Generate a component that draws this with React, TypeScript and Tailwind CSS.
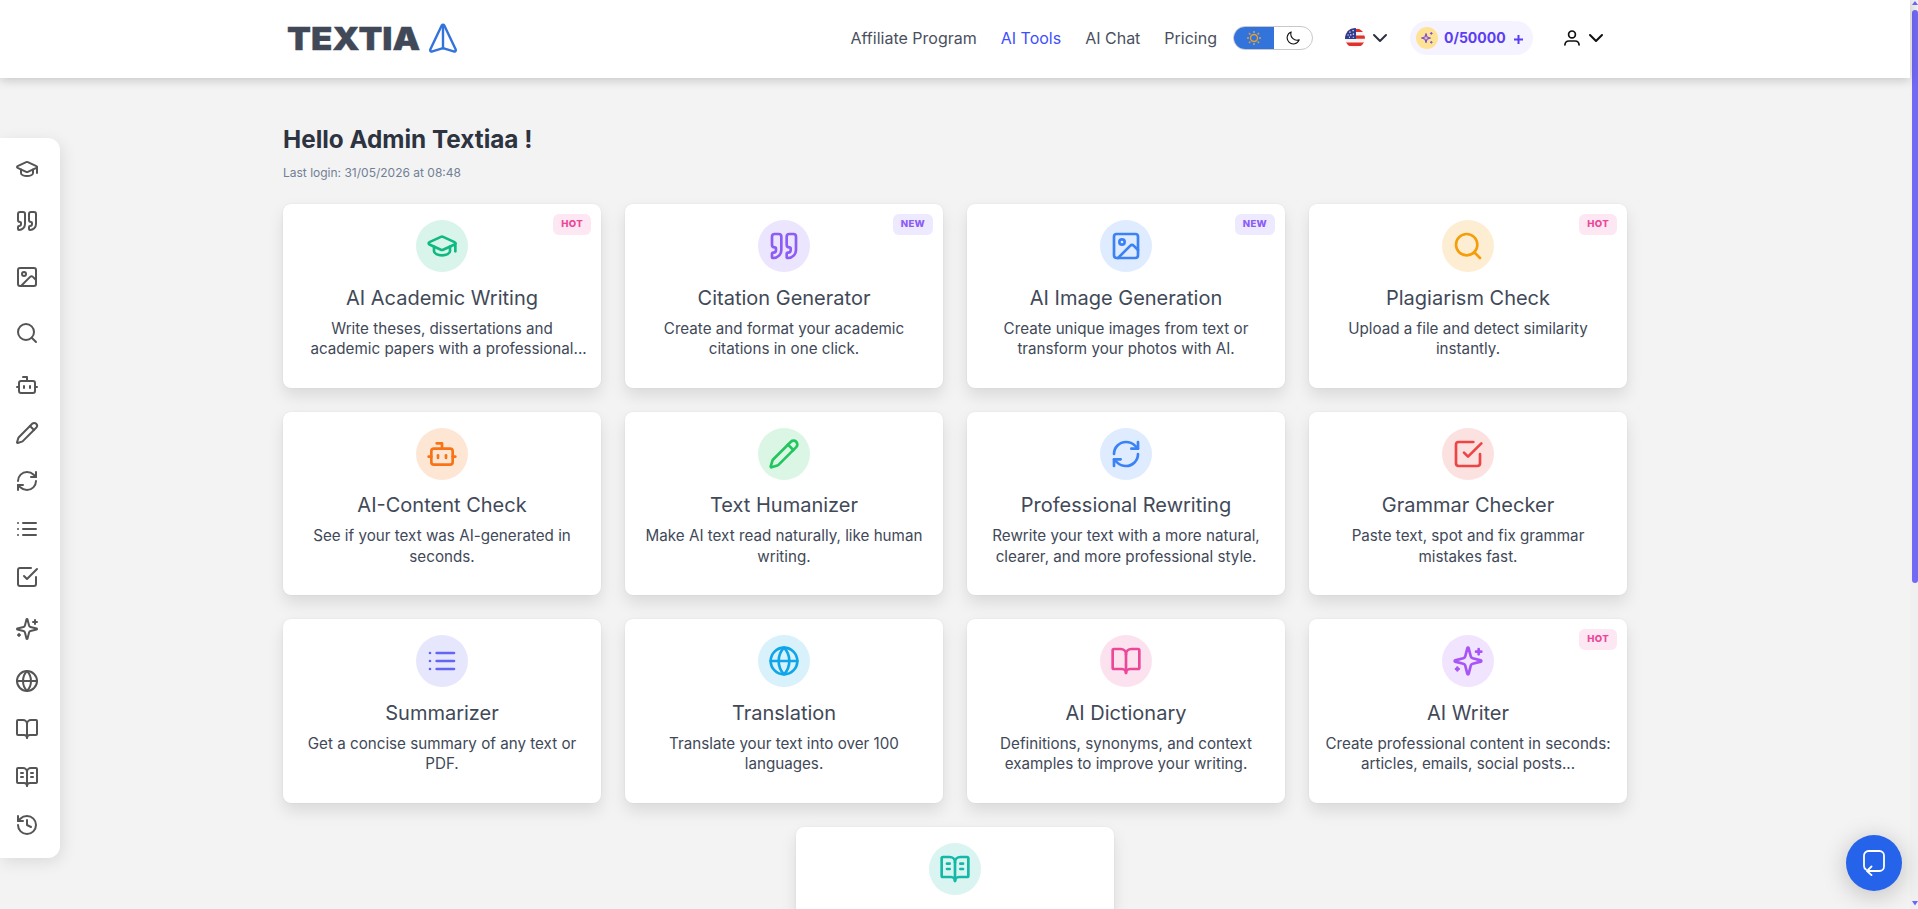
import React from 'react';
import {
  BookOpen,
  BookOpenText,
  Bot,
  ChevronDown,
  Globe,
  GraduationCap,
  History,
  Image as ImageIcon,
  Pencil,
  Quote,
  RefreshCw,
} from 'lucide-react';

interface IconProps {
  size?: number;
}

type IconType = React.ComponentType<IconProps>;

interface Tool {
  title: string;
  desc: string;
  clipped?: boolean;
  icon: IconType;
  color: string;
  badge?: 'HOT' | 'NEW';
}

const Svg: React.FC<{ size?: number; children: React.ReactNode }> = ({ size = 24, children }) => (
  <svg width={size} height={size} viewBox="0 0 24 24" fill="none" stroke="currentColor" strokeWidth={2} strokeLinecap="round" strokeLinejoin="round">
    {children}
  </svg>
);

const Search: IconType = ({ size }) => (
  <Svg size={size}>
    <circle cx="11" cy="11" r="8" />
    <path d="m21 21-4.3-4.3" />
  </Svg>
);

const List: IconType = ({ size }) => (
  <Svg size={size}>
    <path d="M8 6h13M8 12h13M8 18h13M3 6h.01M3 12h.01M3 18h.01" />
  </Svg>
);

const CheckSquare: IconType = ({ size }) => (
  <Svg size={size}>
    <path d="m9 11 3 3L22 4" />
    <path d="M21 12v7a2 2 0 0 1-2 2H5a2 2 0 0 1-2-2V5a2 2 0 0 1 2-2h11" />
  </Svg>
);

const Sparkles: IconType = ({ size }) => (
  <Svg size={size}>
    <path d="M9.937 15.5A2 2 0 0 0 8.5 14.063l-6.135-1.582a.5.5 0 0 1 0-.962L8.5 9.936A2 2 0 0 0 9.937 8.5l1.582-6.135a.5.5 0 0 1 .963 0L14.063 8.5A2 2 0 0 0 15.5 9.937l6.135 1.581a.5.5 0 0 1 0 .964L15.5 14.063a2 2 0 0 0-1.437 1.437l-1.582 6.135a.5.5 0 0 1-.963 0z" />
    <path d="M20 3v4M22 5h-4M4 17v2M5 18H3" />
  </Svg>
);

const SIDEBAR: { icon: IconType; tall?: boolean }[] = [
  { icon: GraduationCap },
  { icon: Quote, tall: true },
  { icon: ImageIcon, tall: true },
  { icon: Search, tall: true },
  { icon: Bot },
  { icon: Pencil },
  { icon: RefreshCw },
  { icon: List },
  { icon: CheckSquare },
  { icon: Sparkles, tall: true },
  { icon: Globe },
  { icon: BookOpen },
  { icon: BookOpenText },
  { icon: History },
];

const TOOLS: Tool[] = [
  { title: 'AI Academic Writing', desc: 'Write theses, dissertations and academic papers with a professional', clipped: true, icon: GraduationCap, color: 'text-[#10b981] bg-[#10b981]/16', badge: 'HOT' },
  { title: 'Citation Generator', desc: 'Create and format your academic citations in one click.', icon: Quote, color: 'text-[#8b5cf6] bg-[#8b5cf6]/16', badge: 'NEW' },
  { title: 'AI Image Generation', desc: 'Create unique images from text or transform your photos with AI.', icon: ImageIcon, color: 'text-[#3b82f6] bg-[#3b82f6]/16', badge: 'NEW' },
  { title: 'Plagiarism Check', desc: 'Upload a file and detect similarity instantly.', icon: Search, color: 'text-[#f59e0b] bg-[#f59e0b]/18', badge: 'HOT' },
  { title: 'AI-Content Check', desc: 'See if your text was AI-generated in seconds.', icon: Bot, color: 'text-[#f97316] bg-[#f97316]/18' },
  { title: 'Text Humanizer', desc: 'Make AI text read naturally, like human writing.', icon: Pencil, color: 'text-[#22c55e] bg-[#22c55e]/16' },
  { title: 'Professional Rewriting', desc: 'Rewrite your text with a more natural, clearer, and more professional style.', icon: RefreshCw, color: 'text-[#3b82f6] bg-[#3b82f6]/16' },
  { title: 'Grammar Checker', desc: 'Paste text, spot and fix grammar mistakes fast.', icon: CheckSquare, color: 'text-[#ef4444] bg-[#ef4444]/16' },
  { title: 'Summarizer', desc: 'Get a concise summary of any text or PDF.', icon: List, color: 'text-[#6366f1] bg-[#6366f1]/16' },
  { title: 'Translation', desc: 'Translate your text into over 100 languages.', icon: Globe, color: 'text-[#0ea5e9] bg-[#0ea5e9]/16' },
  { title: 'AI Dictionary', desc: 'Definitions, synonyms, and context examples to improve your writing.', icon: BookOpen, color: 'text-[#ec4899] bg-[#ec4899]/16' },
  { title: 'AI Writer', desc: 'Create professional content in seconds: articles, emails, social posts...', icon: Sparkles, color: 'text-[#a855f7] bg-[#a855f7]/16', badge: 'HOT' },
  { title: '', desc: '', icon: BookOpenText, color: 'text-[#14b8a6] bg-[#14b8a6]/16' },
];

const BADGE_STYLES = {
  HOT: 'bg-[#fce7f3] text-[#ec4899]',
  NEW: 'bg-[#ede9fe] text-[#8b5cf6]',
};

const ToolCard: React.FC<{ tool: Tool }> = ({ tool }) => {
  const Icon = tool.icon;
  return (
    <div className="relative flex h-[183.6px] w-[318px] flex-col items-center rounded-lg bg-white px-4 pt-4 text-center text-[#414958] shadow-[0_8px_16px_rgba(0,0,0,0.1),0_0_2px_rgba(0,0,0,0.08)]">
      {tool.badge && (
        <span className={`absolute right-[10px] top-[10px] h-[21px] rounded-md px-2 text-[9.6px] font-extrabold leading-[19px] tracking-[0.3px] ${BADGE_STYLES[tool.badge]}`}>
          {tool.badge}
        </span>
      )}
      <div className={`flex size-[52px] shrink-0 items-center justify-center rounded-full ${tool.color}`}>
        <Icon size={32} />
      </div>
      <h2 className="mt-[11.7px] text-xl leading-7">{tool.title}</h2>
      <p className="mt-[7px] w-[286px] text-[15.2px] leading-[20.3px]">
        {tool.desc}
        {/* the ellipsis hangs past the centered line */}
        {tool.clipped && <span className="inline-block w-0 whitespace-nowrap">...</span>}
      </p>
    </div>
  );
};

const Logo = () => (
  <div className="flex items-center">
    <span className="mt-px w-[133px] origin-left scale-x-[1.108] text-[31.5px] font-black leading-none text-[#414958] [-webkit-text-stroke:0.3px_#414958]">TEXTIA</span>
    <svg className="ml-2" width="30" height="30" viewBox="0 0 30 30" fill="none" stroke="#3273dc" strokeWidth="2.4" strokeLinecap="round" strokeLinejoin="round">
      <path d="M13.7 2.4a1.6 1.6 0 0 1 2.6 0L27.6 26.3c.6 1.4-.5 2.6-2 2.1L15 25.2 4.4 28.4c-1.5.5-2.6-.7-2-2.1z" />
      <path d="M15 2.5v22.7" />
    </svg>
  </div>
);

const ThemeToggle = () => (
  <div className="flex h-6 w-20 overflow-hidden rounded-full border border-[#c8c8c8]">
    <div className="flex w-10 items-center justify-center bg-[#3273dc]">
      <svg width="14" height="14" viewBox="0 0 14 14" fill="none" stroke="#dfa23a" strokeWidth="1.4">
        <circle cx="7" cy="7" r="3.5" />
        <path d="M7 0v2M7 12v2M0 7h2M12 7h2M2 2l1.4 1.4M10.6 10.6 12 12M2 12l1.4-1.4M10.6 3.4 12 2" />
      </svg>
    </div>
    <div className="flex flex-1 items-center justify-center">
      <svg width="14" height="14" viewBox="0 0 14 14" fill="none" stroke="#111" strokeWidth="1.1" strokeLinejoin="round">
        <path d="M5.2.9a6.2 6.2 0 1 0 8 7.9A6.2 6.2 0 0 1 5.2.9z" />
      </svg>
    </div>
  </div>
);

const Flag = () => (
  <svg width="20" height="20" viewBox="0 0 20 20">
    <clipPath id="flag">
      <circle cx="10" cy="10" r="10" />
    </clipPath>
    <g clipPath="url(#flag)">
      <path fill="#f4f4f4" d="M0 0h20v20H0z" />
      <path fill="#e0312b" d="M0 1h20v3H0zM0 7.5h20v3.3H0zM0 14.6h20v3.3H0z" />
      <path fill="#2f3c8f" d="M0 0h11v11H0z" />
      <path fill="#fff" d="M7.5 2h1.2v1.2H7.5zM4.3 3.6h1.2v1.2H4.3zM7.8 5.5H9v1.2H7.8zM2.5 6.4h1.2v1.2H2.5zM5.2 6.2h1.2v1.2H5.2zM4 8.8h1v1H4zM7.8 8.7h1v1h-1z" />
    </g>
  </svg>
);

const Header = () => (
  <header className="relative z-10 h-[78px] bg-white shadow-[0_2px_10px_rgba(0,0,0,0.2)]">
    <div className="mx-auto flex h-[76px] w-[1336px] items-center">
      <Logo />
      <nav className="ml-auto flex items-center gap-6 text-base text-[#4a5060]">
        <a>Affiliate Program</a>
        <a className="text-[#3d4eff]">AI Tools</a>
        <a>AI Chat</a>
        <a>Pricing</a>
      </nav>
      <div className="ml-4">
        <ThemeToggle />
      </div>
      <div className="ml-8 flex items-center gap-[3px] text-[#2d3142]">
        <Flag />
        <ChevronDown size={24} />
      </div>
      <div className="ml-[18px] flex h-[34px] w-[123px] items-center rounded-full bg-[#f5f3ff] pl-1.5 text-sm font-bold text-[#5b3df5]">
        <span className="mr-1.5 flex size-[22px] items-center justify-center rounded-full bg-[#fee394] text-[#7c4fd8]">
          <svg width="12" height="12" viewBox="0 0 12 12" fill="none" stroke="currentColor" strokeWidth="1.2" strokeLinejoin="round">
            <path d="M5 1.6 6 5l3.4 1L6 7.1 5 10.5 4 7.1.6 6 4 5z" />
            <path d="M10.3 0v2.8M8.9 1.4h2.8M10.3 9v2.6M9 10.3h2.6" strokeWidth="1" />
          </svg>
        </span>
        0/50000
        <svg className="ml-2 mt-0.5" width="9" height="9" viewBox="0 0 9 9" stroke="currentColor" strokeWidth="2">
          <path d="M4.5 0v9M0 4.5h9" />
        </svg>
      </div>
      <div className="ml-[31px] mr-[15px] flex items-center gap-1 text-[#111]">
        <svg width="16" height="16" viewBox="0 0 16 16" fill="none" stroke="currentColor" strokeWidth="1.7" strokeLinecap="round">
          <circle cx="8" cy="4.4" r="3.4" />
          <path d="M.9 15c.2-2.6 1.6-4 4-4h6.2c2.4 0 3.8 1.4 4 4" />
        </svg>
        <ChevronDown size={24} />
      </div>
    </div>
  </header>
);

const Sidebar = () => (
  <aside className="absolute left-0 top-[138px] flex h-[720px] w-[60px] flex-col rounded-r-xl bg-white pt-[7px] text-[#555] shadow-[2px_4px_16px_rgba(0,0,0,0.1)]">
    {SIDEBAR.map(({ icon: Icon, tall }, i) => (
      <a key={i} className={`flex items-center pl-[15px] ${tall ? 'h-14' : 'h-12'}`}>
        <Icon size={24} />
      </a>
    ))}
  </aside>
);

// Custom thin scrollbar on the right edge
const Scrollbar = () => (
  <div className="flex w-2 flex-col items-end bg-[#f0f0f0]">
    <svg width="6" height="10" viewBox="0 0 6 10" fill="#6c63ff">
      <path d="M3 1 6 5H0z" />
    </svg>
    <div className="h-[573px] w-1.5 rounded-full bg-[#7269f5]" />
    <svg className="mt-auto" width="6" height="8" viewBox="0 0 6 8" fill="#6c63ff">
      <path d="M0 0h6L3 4.5z" />
    </svg>
  </div>
);

export default function App() {
  return (
    <div className="relative flex h-[909px] w-[1918px] overflow-hidden bg-[#f3f3f3] font-['Inter',sans-serif]">
      <div className="w-[1910px]">
        <Header />
        <Sidebar />
        <main className="mx-auto w-[1344px] pt-[43px]">
          <h1 className="text-[24.3px] font-bold leading-9 text-[#2d3340]">Hello Admin Textiaa !</h1>
          <p className="mt-[7px] text-xs leading-[18px] text-[#718096]">Last login: 31/05/2026 at 08:48</p>
          <div className="mt-[22px] flex flex-wrap justify-center gap-6">
            {TOOLS.map((tool, i) => (
              <ToolCard key={i} tool={tool} />
            ))}
          </div>
        </main>
      </div>
      <Scrollbar />
      <button className="absolute bottom-[18px] right-4 flex size-14 items-center justify-center rounded-full bg-[#2563eb] text-white shadow-[0_4px_24px_rgba(0,0,0,0.22)]">
        <svg width="22" height="26" viewBox="0 0 22 26" fill="none" stroke="currentColor" strokeWidth="1.8" strokeLinecap="round" strokeLinejoin="round">
          <path d="M3 19.5C1.6 18.7 1 17.6 1 16V5.5A4.5 4.5 0 0 1 5.500 1h11A4.500 4.500 0 0 1 21 5.500V16.500A4.500 4.500 0 0 1 16.500 21H4.500" />
          <path d="M8.500 16.500 4 21l4.500 4.200" />
        </svg>
      </button>
    </div>
  );
}
